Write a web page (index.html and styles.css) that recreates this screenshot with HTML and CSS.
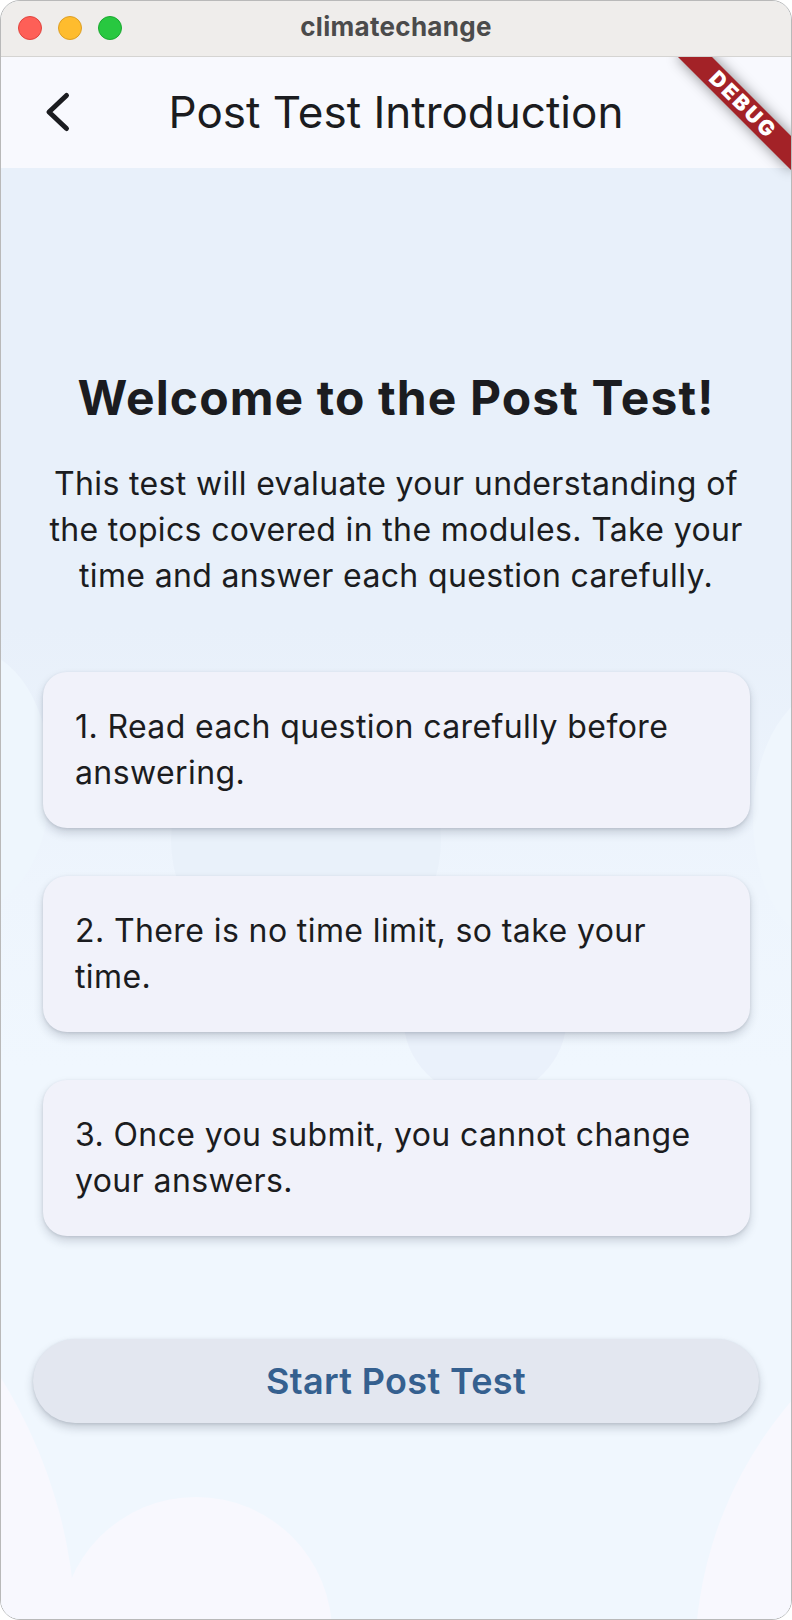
FILE: index.html
```
<!DOCTYPE html>
<html lang="en">
<head>
<meta charset="utf-8">
<title>climatechange</title>
<link rel="stylesheet" href="styles.css">
</head>
<body>
<div class="window">
  <div class="titlebar">
    <div class="lights">
      <span class="light red"></span>
      <span class="light yellow"></span>
      <span class="light green"></span>
    </div>
    <div class="win-title">climatechange</div>
  </div>
  <div class="app">
    <header class="appbar">
      <button class="back" aria-label="Back">
        <svg width="34" height="48" viewBox="0 0 34 48"><path d="M26.5 7.5 L9 24 L26.5 40.5" fill="none" stroke="#1b1c20" stroke-width="5" stroke-linecap="round" stroke-linejoin="round"/></svg>
      </button>
      <h1 class="appbar-title">Post Test Introduction</h1>
    </header>
    <main class="content">
      <div class="decor">
        <span class="blob dark-a"></span>
        <span class="blob dark-b"></span>
        <span class="blob light-l"></span>
        <span class="blob light-r"></span>
        <span class="blob white-l"></span>
        <span class="blob white-s"></span>
        <span class="blob white-r"></span>
      </div>
      <div class="inner">
        <h2 class="welcome">Welcome to the Post Test!</h2>
        <p class="intro">This test will evaluate your understanding of<br>the topics covered in the modules. Take your<br>time and answer each question carefully.</p>
        <ul class="rules">
          <li class="card">1. Read each question carefully before<br>answering.</li>
          <li class="card">2. There is no time limit, so take your<br>time.</li>
          <li class="card">3. Once you submit, you cannot change<br>your answers.</li>
        </ul>
        <button class="start">Start Post Test</button>
      </div>
    </main>
    <div class="debug">DEBUG</div>
  </div>
</div>
</body>
</html>
```
FILE: styles.css
```
* { box-sizing: border-box; }
html, body { margin: 0; padding: 0; background: #ffffff; }
body { width: 792px; height: 1620px; overflow: hidden; font-family: Inter, "Noto Sans", sans-serif; }

.window {
  width: 792px;
  height: 1620px;
  border: 1px solid #b9b9b9;
  border-radius: 20px;
  overflow: hidden;
  display: flex;
  flex-direction: column;
  background: #f0f7fe;
}

.titlebar {
  height: 56px;
  flex: 0 0 56px;
  background: #efedeb;
  border-bottom: 1px solid #d5d4d2;
  display: flex;
  align-items: center;
  justify-content: center;
  position: relative;
}
.lights {
  position: absolute;
  left: 17px;
  top: 15px;
  display: flex;
  gap: 16px;
}
.light {
  width: 24px;
  height: 24px;
  border-radius: 50%;
  display: block;
}
.red { background: #fe5f57; border: 1px solid #e0443e; }
.yellow { background: #febc2e; border: 1px solid #dc9e24; }
.green { background: #28c840; border: 1px solid #1aa830; }
.win-title {
  font-family: Inter, sans-serif;
  font-weight: 700;
  font-size: 26px;
  color: #4b4b4b;
  letter-spacing: 0.3px;
  margin-top: -5px;
}

.app {
  flex: 1;
  position: relative;
  overflow: hidden;
  display: flex;
  flex-direction: column;
}

.appbar {
  height: 111px;
  flex: 0 0 111px;
  background: #f8f9fe;
  display: flex;
  align-items: center;
  justify-content: center;
  position: relative;
}
.back {
  position: absolute;
  left: 39px;
  top: 31px;
  width: 34px;
  height: 48px;
  padding: 0;
  border: 0;
  background: none;
}
.back svg { display: block; }
.appbar-title {
  margin: 0;
  font-weight: 400;
  font-size: 44px;
  letter-spacing: 0px;
  color: #1b1c20;
  line-height: 1;
  margin-top: -2px;
}

.content {
  flex: 1;
  position: relative;
  background: linear-gradient(180deg, #e8f0fa 0px, #e8f0fa 460px, #eef5fd 720px, #f0f7fe 900px, #f0f7fe 100%);
}
.decor {
  position: absolute;
  inset: 0;
  overflow: hidden;
}
.blob {
  position: absolute;
  border-radius: 50%;
  display: block;
}
.dark-a { left: 170px; top: 537px; width: 270px; height: 270px; background: #e9f1fa; }
.dark-b { left: 402px; top: 766px; width: 164px; height: 164px; background: #eaf1fb; }
.light-l { left: -110px; top: 482px; width: 160px; height: 260px; background: #eef6fd; }
.light-r { left: 752px; top: 520px; width: 160px; height: 260px; background: #eff6fd; }
.white-l { left: -915px; top: 977px; width: 990px; height: 990px; background: #f8f8fe; }
.white-s { left: 59px; top: 1329px; width: 272px; height: 272px; background: #f8f8fe; }
.white-r { left: 694px; top: 1096px; width: 792px; height: 792px; background: #f8f8fe; }

.inner {
  position: relative;
  padding: 201px 32px 0;
  display: flex;
  flex-direction: column;
  align-items: stretch;
}

.welcome {
  margin: 0;
  text-align: center;
  font-size: 48px;
  font-weight: 700;
  line-height: 58px;
  letter-spacing: 1.1px;
  color: #1b1c20;
}
.intro {
  margin: 34px 0 0;
  text-align: center;
  font-size: 32px;
  line-height: 46px;
  font-weight: 400;
  color: #1b1c20;
  letter-spacing: 0.35px;
}

.rules {
  list-style: none;
  margin: 73px 0 0;
  padding: 0 9px 0 10px;
  display: flex;
  flex-direction: column;
  gap: 48px;
}
.card {
  background: #f1f2fa;
  border-radius: 24px;
  padding: 32px 32px;
  font-size: 32px;
  line-height: 46px;
  letter-spacing: 0.4px;
  color: #1b1c20;
  box-shadow: 0 5px 10px rgba(30, 40, 60, 0.18), 0 1px 3px rgba(30, 40, 60, 0.12);
}

.start {
  margin-top: 103px;
  height: 84px;
  border: 0;
  border-radius: 42px;
  background: #e3e7f0;
  color: #35608f;
  font-family: Inter, sans-serif;
  font-size: 36px;
  font-weight: 600;
  letter-spacing: 0.35px;
  box-shadow: 0 5px 10px rgba(30, 40, 60, 0.2), 0 1px 3px rgba(30, 40, 60, 0.12);
}

.debug {
  position: absolute;
  top: 36px;
  right: -32px;
  width: 160px;
  height: 24px;
  transform: rotate(45deg);
  background: #a32227;
  color: #ffffff;
  font-family: Inter, sans-serif;
  font-weight: 900;
  font-size: 21px;
  line-height: 24px;
  letter-spacing: 2.5px;
  text-align: center;
  box-shadow: 0 0 14px rgba(0, 0, 0, 0.45);
}
```
